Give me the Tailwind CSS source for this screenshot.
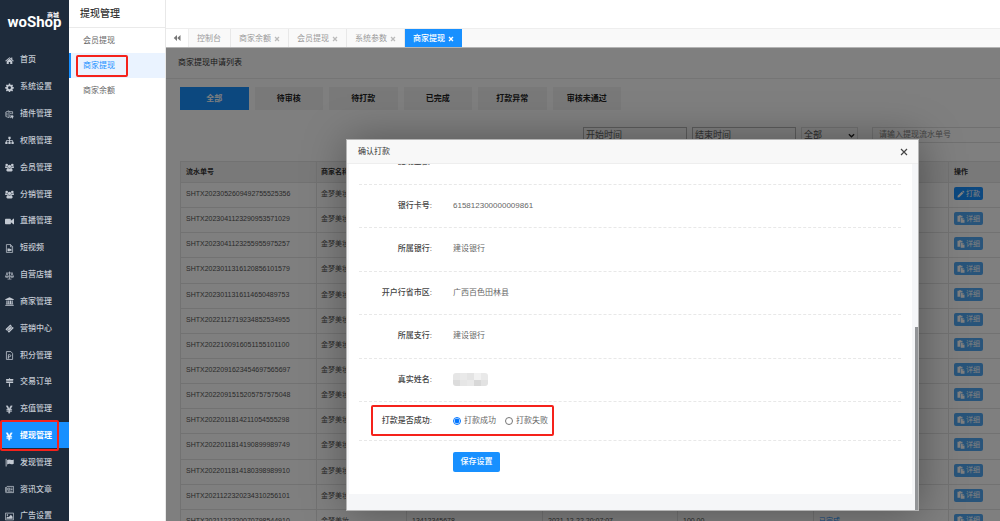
<!DOCTYPE html>
<html lang="zh-CN">
<head>
<meta charset="utf-8">
<meta name="viewport" content="width=device-width, initial-scale=1">
<title>提现管理 - WoShop</title>
<script src="https://cdn.jsdelivr.net/npm/@tailwindcss/browser@4"></script>
</head>
<body class="flex h-screen overflow-hidden bg-white font-['Liberation_Sans','Noto_Sans_CJK_SC',sans-serif] text-[8px] leading-3 text-[#666]">

<svg class="hidden" aria-hidden="true">
  <symbol id="home" viewBox="0 0 16 16"><path d="M8 2 .5 8.6l.9 1L8 3.900l6.600 5.700.9-1L13 6.400V2.500h-2v2.100zM8 5 3 9.300V14h3.700v-3.500h2.600V14H13V9.300z"/></symbol>
  <symbol id="gear" viewBox="0 0 16 16"><path fill-rule="evenodd" d="M6.800 1h2.400l.4 2 1.300.6L12.600 2.500l1.700 1.700-1.100 1.600.6 1.300 2 .4v2.300l-2 .4-.6 1.300 1.100 1.700-1.700 1.700-1.700-1.100-1.300.5-.4 2H6.800l-.4-2-1.300-.5-1.700 1.100-1.700-1.700 1.100-1.700-.6-1.300-2-.4V7.500l2-.4.6-1.300-1.100-1.600 1.700-1.700 1.700 1.100L6.400 3zM8 5.900a2.600 2.600 0 1 0 0 5.200 2.600 2.600 0 0 0 0-5.200z"/></symbol>
  <symbol id="plug" viewBox="0 0 16 16"><path fill="none" stroke="currentColor" stroke-width="1.300" d="M1.500 3.500 7 1.500v12l-5.500-2zM7 3h6.500v4M3.500 5v5M9 6h3M9 8.500v5h2"/><path d="M10.500 8.500h1v1.500h1.500V8.500h1V10h1v2.500L13.500 14v1.500h-1V14L10.500 12.500z"/></symbol>
  <symbol id="sitemap" viewBox="0 0 16 16"><path d="M6 1.500h4v4H8.700v2H14V10h1.500v4h-4v-4h1.300V8.700H8.700V10H10v4H6v-4h1.300V8.700H3.200V10h1.300v4h-4v-4H2V7.500h5.300v-2H6z"/></symbol>
  <symbol id="group" viewBox="0 0 16 16"><circle cx="3" cy="3.500" r="2.300"/><circle cx="13" cy="3.500" r="2.300"/><circle cx="8" cy="6" r="3"/><path d="M0 7.500C0 6 1 5.800 1.700 5.800c1 .7 2 .7 3 .2 0 1.300.4 2.200 1 2.800H1C.3 8.800 0 8.300 0 7.500zM16 7.500c0-1.500-1-1.700-1.700-1.700-1 .7-2 .7-3 .2 0 1.300-.4 2.200-1 2.800H15c.700 0 1-.5 1-1.300zM2.500 13c0-2.500 1.200-4.200 3-4.200 1.500 1.200 3.500 1.200 5 0 1.800 0 3 1.700 3 4.200 0 1.200-.8 2-2 2h-7c-1.200 0-2-.8-2-2z"/></symbol>
  <symbol id="video" viewBox="0 0 16 16"><path d="M2 3h6.500c1.300 0 2 .7 2 2v1.800L15 3c.5-.3 1 0 1 .5v9c0 .5-.5.8-1 .5l-4.500-3.800V11c0 1.300-.7 2-2 2H2c-1.300 0-2-.7-2-2V5c0-1.300.7-2 2-2z"/></symbol>
  <symbol id="filevideo" viewBox="0 0 16 16"><path fill="none" stroke="currentColor" stroke-width="1.300" d="M2.500 1h7.500l3.500 3.500V15h-11zM9.800 1v4h3.700"/><path d="M4.500 8h4v1.500L11.500 8v5l-3-1.500V13h-4z"/></symbol>
  <symbol id="scale" viewBox="0 0 16 16"><path fill="none" stroke="currentColor" stroke-width="1.200" d="M8 1v13M4.500 14.400h7M2 3.500h12M3.500 4 .8 10h5.400zM12.500 4 9.800 10h5.400z"/><path d="M.5 10h6c-.3 2.300-5.700 2.300-6 0zM9.500 10h6c-.3 2.300-5.700 2.300-6 0z"/></symbol>
  <symbol id="bank" viewBox="0 0 16 16"><path d="M8 .5 15.500 4v1.200H.5V4zM2.500 6h2v6h1.200V6h2v6h1V6h2v6h1V6h2v6h1v1.200H1.500V12h1zM.5 14h15v1.500H.5z"/></symbol>
  <symbol id="ticket" viewBox="0 0 16 16"><path fill-rule="evenodd" d="M9.500 1 12 3.500a1.500 1.500 0 0 0 2 2L15.500 7 7 15.500 5 13.500a1.500 1.500 0 0 0-2-2L.8 9.500zM9.300 4.200 4 9.500l3 3 5.300-5.300zM9.300 5l2.200 2.200L7 11.700 4.800 9.500z"/></symbol>
  <symbol id="filep" viewBox="0 0 16 16"><path fill="none" stroke="currentColor" stroke-width="1.400" d="M2.500 1h8l3 3.500V15h-11zM6 13V6.500h2.300c2.700 0 2.700 3.600 0 3.600H6M4.800 12.500h2.700"/></symbol>
  <symbol id="sign" viewBox="0 0 16 16"><path d="M7 .5h2v1.300h5l1.300 1.400L14 4.700H2V1.800h5zM2 6h12.500v2.900H3L1.500 7.500zM7 9.500h2v6H7z"/></symbol>
  <symbol id="yen" viewBox="0 0 16 16"><path stroke="currentColor" stroke-width=".6" d="M2 1.500h2.900L7.500 6.500l2.600-5H13L9.700 7.500H12v1.300H8.700v1.300H12v1.300H8.700v3.100H6.300v-3.100H3v-1.300h3.300V8.800H3V7.500h2.300z"/></symbol>
  <symbol id="flag" viewBox="0 0 16 16"><path d="M1 2a1 1 0 1 1 1.800.8V15H1.200V2.800zM3.800 3.500c3-1.800 5-.9 6.500-.2 1.700.8 3.200.3 5.200-.8v7.800c-2.500 1.300-4.200 1.300-6 .4-1.700-.8-3.500-.3-5.700.8z"/></symbol>
  <symbol id="news" viewBox="0 0 16 16"><path fill="none" stroke="currentColor" stroke-width="1.300" d="M3 2.500h12.300v11H2.200c-1 0-1.500-.6-1.500-1.500V4.500H3v8M5 5.500h3.500v3.500H5zM10 5.500h3.500M10 8h3.500M5 11h8.500"/></symbol>
  <symbol id="image" viewBox="0 0 16 16"><path fill="none" stroke="currentColor" stroke-width="1.300" d="M.7 2h14.600v12H.7z"/><circle cx="4.300" cy="5.500" r="1.400"/><path d="M2.500 12v-2L5 7.800l1.500 1.500L10.500 5l3 3.500V12z"/></symbol>
  <symbol id="back" viewBox="0 0 16 16"><path d="M8 2v12L1.500 8zM15 2v12L8.500 8z"/></symbol>
  <symbol id="times" viewBox="0 0 16 16"><path d="M4 1.500 8 5.500l4-4L14.500 4l-4 4 4 4L12 14.500l-4-4-4 4L1.500 12l4-4-4-4z"/></symbol>
  <symbol id="pencil" viewBox="0 0 16 16"><path d="M12 .8 15.200 4 13.500 5.700 10.300 2.500zM9.500 3.300l3.200 3.200L4.500 14.700 1 15.200l.4-3.700z"/></symbol>
  <symbol id="paste" viewBox="0 0 16 16"><path d="M1 1.500h3V.5h4v1h3V5H6.500v8.500H1z"/><path d="M7.500 6h4v3.500H15v6H7.500z"/><path d="M12.300 6 15 8.700h-2.700z"/></symbol>
</svg>

<aside class="w-[69px] relative shrink-0 overflow-hidden bg-[#1e2b3b] text-[#c3c9d2]">
  <a href="#" class="relative flex h-[46px] items-center justify-center pb-[2px] font-[Roboto,sans-serif] text-[15px] leading-4 font-bold text-white">woShop<span class="absolute top-3 right-[10px] font-['Noto_Sans_CJK_SC',sans-serif] text-[6px] leading-[6px]">商城</span></a>
  <nav id="menu" class="flex h-[483px] flex-col font-medium"></nav>
  <div class="pointer-events-none absolute top-[420px] left-0 h-[31px] w-[59px] rounded-xs border-2 border-[#f5221b]"></div>
</aside>

<aside class="relative w-[97px] shrink-0 border-r border-[#e8e8e8] bg-white">
  <h1 class="flex h-7 items-center border-b border-[#eaeaea] pl-[11px] text-[10px] font-medium text-[#333]">提现管理</h1>
  <nav class="flex flex-col">
    <a href="#" class="flex h-[25px] items-center border-l-2 border-transparent pl-3">会员提现</a>
    <a href="#" class="flex h-[25px] items-center border-l-2 border-[#1890ff] bg-[#eaf3ff] pl-3 text-[#1890ff]">商家提现</a>
    <a href="#" class="flex h-[25px] items-center border-l-2 border-transparent pl-3">商家余额</a>
  </nav>
  <div class="pointer-events-none absolute top-[55px] left-[7px] h-[22px] w-[52px] rounded-xs border-2 border-[#f5221b]"></div>
</aside>

<main class="flex min-w-0 flex-1 flex-col">
  <header class="h-7 shrink-0"></header>
  <div class="flex h-5 shrink-0 border-t border-b border-t-[#eee] border-b-[#b4b4b4] bg-[#f9f9f9] text-[#999]">
    <button class="flex w-[23px] items-center justify-center border-r border-[#eee] bg-white text-[#777]" aria-label="向左"><svg class="size-[8px]" fill="currentColor"><use href="#back"/></svg></button>
    <a href="#" class="flex items-center border-r border-[#e8e8e8] pt-px pr-[9px] pl-2">控制台</a>
    <a href="#" class="flex items-center gap-[3px] border-r border-[#e8e8e8] px-2 pt-px">商家余额<svg class="size-[6px]" fill="#bbb"><use href="#times"/></svg></a>
    <a href="#" class="flex items-center gap-[3px] border-r border-[#e8e8e8] px-2 pt-px">会员提现<svg class="size-[6px]" fill="#bbb"><use href="#times"/></svg></a>
    <a href="#" class="flex items-center gap-[3px] border-r border-[#e8e8e8] px-2 pt-px">系统参数<svg class="size-[6px]" fill="#bbb"><use href="#times"/></svg></a>
    <a href="#" class="flex items-center gap-[3px] bg-[#1890ff] px-2 pt-px font-medium text-white">商家提现<svg class="size-[6px]" fill="currentColor"><use href="#times"/></svg></a>
  </div>

  <section class="relative min-h-0 flex-1 overflow-hidden bg-white">
    <h2 class="flex h-[31px] items-center border-b border-[#eaeaea] pl-3 text-[#333]">商家提现申请列表</h2>
    <div class="pt-2 pl-[14px]">
      <div class="grid h-[23px] w-[441px] grid-cols-6 gap-[6px] font-bold text-[#222]">
        <button class="bg-[#1890ff] text-white">全部</button>
        <button class="bg-[#f3f3f3]">待审核</button>
        <button class="bg-[#f3f3f3]">待打款</button>
        <button class="bg-[#f3f3f3]">已完成</button>
        <button class="bg-[#f3f3f3]">打款异常</button>
        <button class="bg-[#f3f3f3]">审核未通过</button>
      </div>
      <form class="mt-[17px] flex h-4 justify-end text-[9px] text-[#555]">
        <input aria-label="开始时间" placeholder="开始时间" class="mr-[5px] w-[104px] border border-[#bbb] px-[2px] placeholder:text-[#666]">
        <input aria-label="结束时间" placeholder="结束时间" class="mr-[5px] w-[104px] border border-[#bbb] px-[2px] placeholder:text-[#666]">
        <div class="relative mr-[14px] w-[57px]">
          <select aria-label="状态" class="h-full w-full appearance-none border border-[#e0e0e0] px-[2px]"><option>全部</option></select>
          <svg class="pointer-events-none absolute top-[5px] right-[3px] size-[7px]" viewBox="0 0 8 8" fill="none" stroke="#222" stroke-width="1.500"><path d="m1 2.500 3 3 3-3"/></svg>
        </div>
        <input aria-label="流水单号" placeholder="请输入提现流水单号" class="w-[128px] border border-r-0 border-[#e0e0e0] px-[6px] text-[8px] placeholder:text-[#888]">
      </form>
      <table class="mt-[18px] h-[374px] w-full table-fixed border-collapse text-left text-[7px] text-[#555]">
        <colgroup><col class="w-[136px]"><col class="w-[90px]"><col class="w-[136px]"><col class="w-[135px]"><col class="w-[136px]"><col class="w-[135px]"><col></colgroup>
        <thead>
          <tr class="h-[21px] bg-[#f2f2f2] text-[#333]">
            <th class="border border-[#e4e4e4] px-[5px]">流水单号</th><th class="border border-[#e4e4e4] px-1">商家名称</th><th class="border border-[#e4e4e4] px-[5px]">联系电话</th><th class="border border-[#e4e4e4] px-[5px]">申请时间</th><th class="border border-[#e4e4e4] px-[5px]">提现金额</th><th class="border border-[#e4e4e4] px-[5px]">状态</th><th class="border border-r-0 border-[#e4e4e4] px-[5px]">操作</th>
          </tr>
        </thead>
        <tbody id="rows"></tbody>
      </table>
    </div>

    <div class="absolute inset-0 bg-black/50"></div>

    <div role="dialog" aria-labelledby="dlg" class="absolute top-[91px] right-[81px] left-[180px] flex h-[372px] flex-col border border-[#b5b5b5] bg-[#f5f6f8] shadow-[1px_1px_40px_rgba(0,0,0,0.35)]">
      <header class="flex h-6 shrink-0 items-center justify-between border-b border-[#eee] bg-[#f8f8f8] pr-[10px] pl-[11px] text-[#333]">
        <h3 id="dlg">确认打款</h3>
        <button aria-label="关闭"><svg class="size-[8px]" viewBox="0 0 8 8" stroke="#444" stroke-width="1.200"><path d="m1 1 6 6M7 1 1 7"/></svg></button>
      </header>
      <form class="mr-[6px] mb-[16px] ml-[2px] flex min-h-0 flex-1 flex-col justify-end overflow-hidden bg-white pr-[11px] pb-[22px] pl-[10px]">
        <dl class="flex h-[261px] shrink-0 flex-col">
          <div class="flex flex-1 items-center border-b border-dashed border-[#e8e8e8]"><dt class="w-[73px] text-right font-medium text-[#444]">提现金额:</dt><dd class="pl-[21px]">100.00</dd></div>
          <div class="flex flex-1 items-center border-b border-dashed border-[#e8e8e8]"><dt class="w-[73px] text-right font-medium text-[#444]">银行卡号:</dt><dd class="pl-[21px]">615812300000009861</dd></div>
          <div class="flex flex-1 items-center border-b border-dashed border-[#e8e8e8]"><dt class="w-[73px] text-right font-medium text-[#444]">所属银行:</dt><dd class="pl-[21px]">建设银行</dd></div>
          <div class="flex flex-1 items-center border-b border-dashed border-[#e8e8e8]"><dt class="w-[73px] text-right font-medium text-[#444]">开户行省市区:</dt><dd class="pl-[21px]">广西百色田林县</dd></div>
          <div class="flex flex-1 items-center border-b border-dashed border-[#e8e8e8]"><dt class="w-[73px] text-right font-medium text-[#444]">所属支行:</dt><dd class="pl-[21px]">建设银行</dd></div>
          <div class="flex flex-1 items-center border-b border-dashed border-[#e8e8e8]"><dt class="w-[73px] text-right font-medium text-[#444]">真实姓名:</dt>
            <dd class="pl-[21px]"><span class="grid h-[13px] w-[35px] grid-cols-5 overflow-hidden rounded-[3px]"><i class="bg-[#e6e6e6]"></i><i class="bg-[#e9e9e9]"></i><i class="bg-[#e4e4e4]"></i><i class="bg-[#f1f1f1]"></i><i class="bg-[#e9e9e9]"></i><i class="bg-[#dcdcdc]"></i><i class="bg-[#e6e6e6]"></i><i class="bg-[#e9e9e9]"></i><i class="bg-[#d8d8d8]"></i><i class="bg-[#e2e2e2]"></i></span></dd></div>
        </dl>
        <div role="radiogroup" aria-labelledby="result-label" class="flex h-[39px] shrink-0 items-center border-b border-dashed border-[#e8e8e8]">
          <span id="result-label" class="w-[73px] text-right font-medium text-[#444]">打款是否成功:</span>
          <label class="flex items-center gap-[3px] pl-[21px]"><input type="radio" name="result" checked class="size-[8px] accent-[#0075ff]">打款成功</label>
          <label class="flex items-center gap-[3px] pl-[9px]"><input type="radio" name="result" class="size-[8px] accent-[#0075ff]">打款失败</label>
        </div>
        <button type="button" class="mt-[11px] ml-[94px] h-5 w-[47px] shrink-0 rounded-xs bg-[#1890ff] font-medium text-white">保存设置</button>
      </form>
      <div class="pointer-events-none absolute top-[265px] left-[24px] h-[31px] w-[183px] rounded-xs border-2 border-[#f5221b]"></div>
      <div class="absolute right-0 bottom-0 h-[183px] w-[3px] bg-[#929497]"></div>
    </div>
  </section>
</main>

<script>
const menu = [['home','首页'],['gear','系统设置'],['plug','插件管理'],['sitemap','权限管理'],['group','会员管理'],['group','分销管理'],['video','直播管理'],['filevideo','短视频'],['scale','自营店铺'],['bank','商家管理'],['ticket','营销中心'],['filep','积分管理'],['sign','交易订单'],['yen','充值管理'],['yen','提现管理'],['flag','发现管理'],['news','资讯文章'],['image','广告设置']];
document.getElementById('menu').innerHTML = menu.map(([icon, name]) =>
  `<a href="#" class="${name === '提现管理' ? 'flex flex-1 items-center gap-[6px] bg-[#1890ff] pt-[2px] pl-[5px] font-bold text-white' : 'flex flex-1 items-center gap-[6px] pt-[2px] pl-[5px]'}"><svg class="size-[9px]" fill="currentColor"><use href="#${icon}"/></svg>${name}</a>`).join('');

const serials = ['2023052609492755525356','2023041123290953571029','2023041123255955975257','2023011316120856101579','2023011316114650489753','2022112719234852534955','2022100916051155101100','2022091623454697565697','2022091515205757575048','2022011814211054555298','2022011814190899989749','2022011814180398989910','2021122320234310256101','2021122220070798544910'];
document.getElementById('rows').innerHTML = serials.map((s, i) => {
  const d = `${s.slice(0,4)}-${s.slice(4,6)}-${s.slice(6,8)} ${s.slice(8,10)}:${s.slice(10,12)}:${s.slice(12,14)}`;
  const action = i === 0
    ? '<button class="flex h-[13px] items-center gap-px rounded-xs bg-[#1890ff] px-[3px] text-white"><svg class="size-[8px]" fill="currentColor"><use href="#pencil"/></svg>打款</button>'
    : '<button class="flex h-[13px] items-center gap-px rounded-xs bg-[#50a8f5] px-[3px] text-white"><svg class="size-[8px]" fill="currentColor"><use href="#paste"/></svg>详细</button>';
  return `<tr><td class="border border-[#e4e4e4] px-[5px] pb-[2px]">SHTX${s}</td><td class="border border-[#e4e4e4] px-1 pb-[2px]">金梦美妆</td><td class="border border-[#e4e4e4] px-[5px] pb-[2px]">13412345678</td><td class="border border-[#e4e4e4] px-[5px] pb-[2px]">${d}</td><td class="border border-[#e4e4e4] px-[5px] pb-[2px]">100.00</td><td class="border border-[#e4e4e4] px-[5px] pb-[2px] text-[#1890ff]">${i === 0 ? '待打款' : '已完成'}</td><td class="border border-r-0 border-[#e4e4e4] px-[5px] pb-[3px]">${action}</td></tr>`;
}).join('');
</script>
</body>
</html>
